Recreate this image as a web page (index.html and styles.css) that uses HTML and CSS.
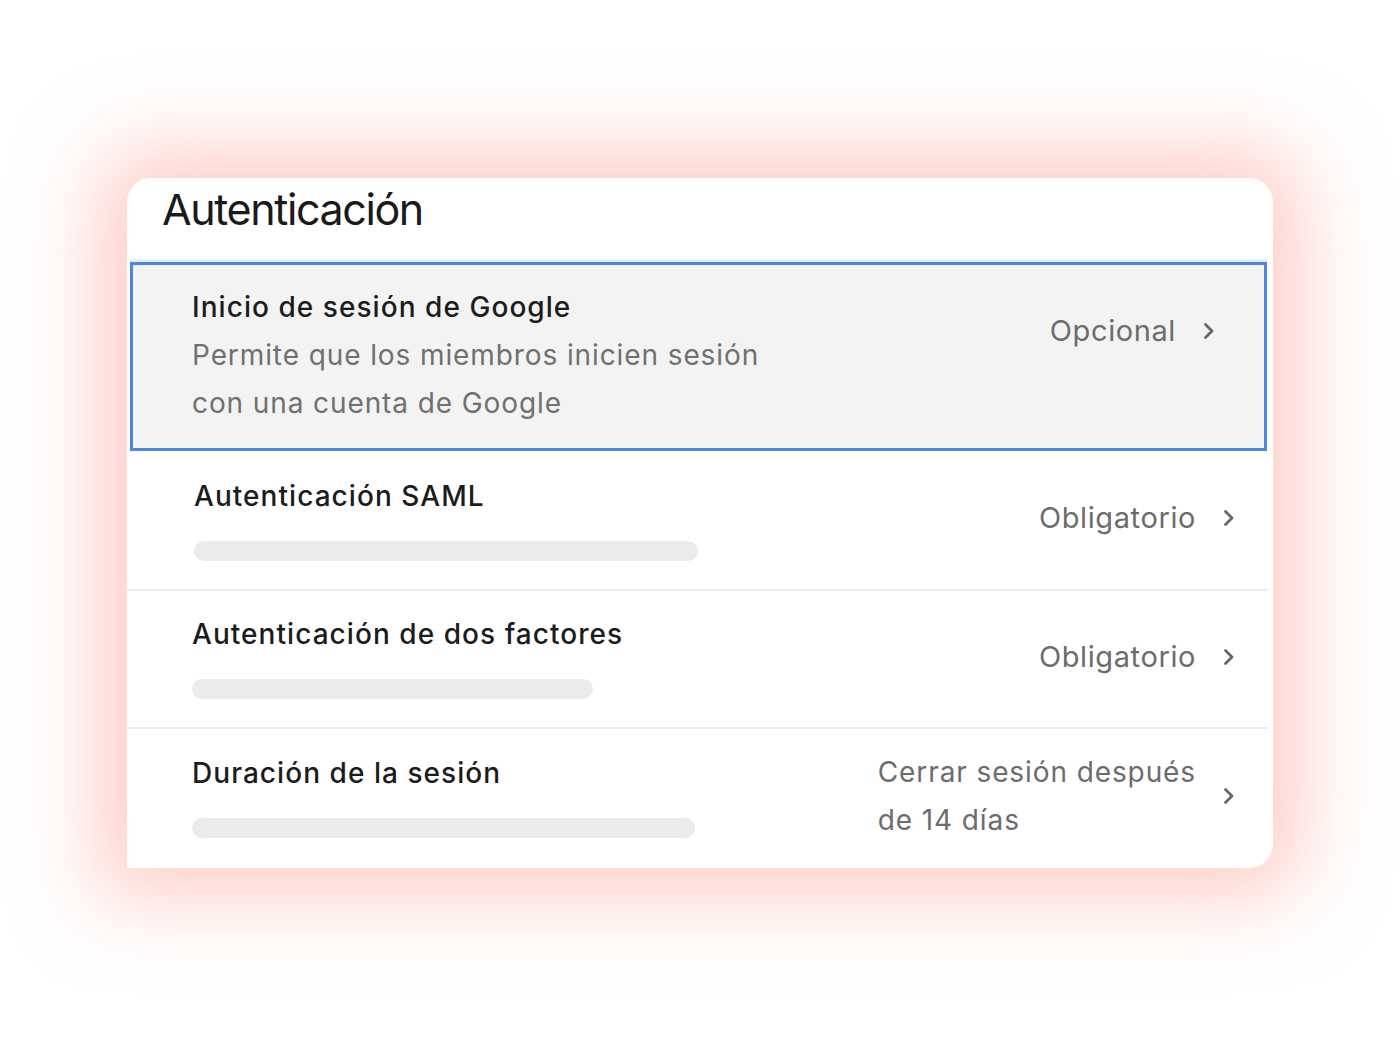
FILE: index.html
```html
<!DOCTYPE html>
<html lang="es">
<head>
<meta charset="utf-8">
<title>Autenticación</title>
<link rel="stylesheet" href="styles.css">
</head>
<body>
<div class="stage">
  <section class="card">
    <h1 class="card-title">Autenticación</h1>
    <div class="rows">
      <div class="row row-selected">
        <div class="row-main">
          <div class="row-title small">Inicio de sesión de Google</div>
          <div class="row-desc">Permite que los miembros inicien sesión<br>con una cuenta de Google</div>
        </div>
        <div class="row-side side-top">
          <span class="row-value">Opcional</span>
          <svg class="chev" width="14" height="20" viewBox="0 0 14 20"><polyline points="3.5,3.5 10,10 3.5,16.5" fill="none" stroke="#666" stroke-width="2.8" stroke-linecap="round" stroke-linejoin="round"/></svg>
        </div>
      </div>
      <div class="row row-2">
        <div class="row-main">
          <div class="row-title">Autenticación SAML</div>
          <div class="skeleton w-saml"></div>
        </div>
        <div class="row-side">
          <span class="row-value">Obligatorio</span>
          <svg class="chev" width="14" height="20" viewBox="0 0 14 20"><polyline points="3.5,3.5 10,10 3.5,16.5" fill="none" stroke="#666" stroke-width="2.8" stroke-linecap="round" stroke-linejoin="round"/></svg>
        </div>
      </div>
      <div class="row row-3">
        <div class="row-main">
          <div class="row-title">Autenticación de dos factores</div>
          <div class="skeleton w-2fa"></div>
        </div>
        <div class="row-side">
          <span class="row-value">Obligatorio</span>
          <svg class="chev" width="14" height="20" viewBox="0 0 14 20"><polyline points="3.5,3.5 10,10 3.5,16.5" fill="none" stroke="#666" stroke-width="2.8" stroke-linecap="round" stroke-linejoin="round"/></svg>
        </div>
      </div>
      <div class="row row-last">
        <div class="row-main">
          <div class="row-title">Duración de la sesión</div>
          <div class="skeleton w-dur"></div>
        </div>
        <div class="row-side">
          <span class="row-value multi">Cerrar sesión después<br>de 14 días</span>
          <svg class="chev" width="14" height="20" viewBox="0 0 14 20"><polyline points="3.5,3.5 10,10 3.5,16.5" fill="none" stroke="#666" stroke-width="2.8" stroke-linecap="round" stroke-linejoin="round"/></svg>
        </div>
      </div>
    </div>
  </section>
</div>
</body>
</html>
```

FILE: styles.css
```css
* { box-sizing: border-box; }
html, body { margin: 0; padding: 0; background: #ffffff; }
body {
  font-family: Inter, "Noto Sans", "Liberation Sans", sans-serif;
  color: #1c1c1c;
  width: 1400px;
  height: 1048px;
  overflow: hidden;
}
.stage {
  padding: 178px 0 0 127px;
}
.card {
  width: 1146px;
  height: 690px;
  background: #ffffff;
  border-radius: 24px 24px 24px 0;
  box-shadow: 0 0 80px 30px rgba(255, 160, 150, 0.5);
  display: flex;
  flex-direction: column;
  overflow: hidden;
}
.card-title {
  margin: 0;
  height: 84px;
  padding: 5px 0 0 35px;
  font-size: 43px;
  font-weight: 400;
  letter-spacing: -1.4px;
  line-height: 52px;
  color: #1a1a1a;
}
.rows {
  width: 1141px;
  display: flex;
  flex-direction: column;
}
.row {
  display: flex;
  justify-content: space-between;
  align-items: center;
  border-bottom: 2px solid #ececec;
  padding: 24px 32px 28px 66px;
  height: 139px;
}
.row-2 { height: 140px; padding-left: 67px; }
.row-3 { height: 138px; padding-top: 23px; padding-left: 65px; }
.row-last { border-bottom: none; height: 139px; padding-top: 22px; padding-left: 65px; }
.row-selected {
  margin-left: 3px;
  width: 1137px;
  height: 189px;
  background: #f4f3f3;
  border: 3px solid #4a86ea;
  box-shadow: 0 -3px 0 0 #e4eefc;
  padding: 22px 48px 20px 59px;
  align-items: flex-start;
}
.row-main {
  display: flex;
  flex-direction: column;
}
.row-title {
  font-size: 28px;
  line-height: 40px;
  font-weight: 500;
  letter-spacing: 1.05px;
  color: #1c1c1c;
}
.row-title.small {
  font-size: 28px;
  letter-spacing: 1.05px;
}
.row-desc {
  margin-top: 4px;
  font-size: 28px;
  line-height: 48px;
  color: #707070;
  letter-spacing: 0.9px;
}
.skeleton {
  margin-top: 25px;
  height: 20px;
  border-radius: 10px;
  background: #ebebea;
}
.w-saml { width: 504px; }
.w-2fa { width: 401px; }
.w-dur { width: 503px; }
.row-side {
  display: flex;
  align-items: center;
  gap: 26px;
}
.side-top {
  margin-top: 20px;
}
.row-value {
  font-size: 29px;
  line-height: 48px;
  color: #6c6c6c;
  letter-spacing: 0.6px;
}
.row-value.multi {
  font-size: 28px;
  letter-spacing: 0.9px;
}
.chev { display: block; }
```
